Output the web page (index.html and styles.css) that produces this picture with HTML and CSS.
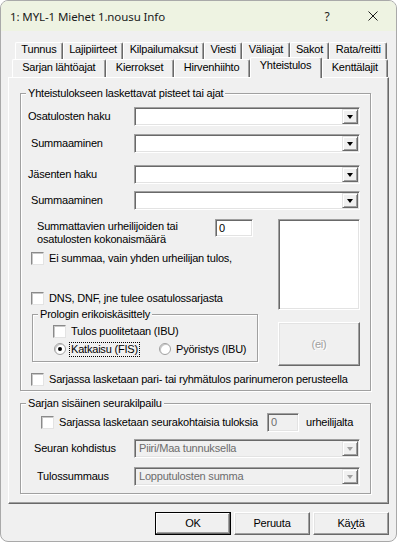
FILE: index.html
```html
<!DOCTYPE html>
<html lang="fi">
<head>
    <meta charset="UTF-8">
    <title>1: MYL-1 Miehet 1.nousu Info</title>
    <link rel="stylesheet" href="styles.css">
</head>
<body>
<div class="window">

    <!-- otsikkopalkki -->
    <div class="titlebar">
        <span class="title">1: MYL-1 Miehet 1.nousu Info</span>
        <span class="caption-btn">?</span>
        <span class="caption-btn">
            <svg width="10" height="10" viewBox="0 0 10 10"><path d="M0.5 0.5L9.5 9.5M9.5 0.5L0.5 9.5" stroke="#1b1b1b" stroke-width="1" fill="none"/></svg>
        </span>
    </div>

    <div class="dialog">

        <!-- välilehdet -->
        <div class="tabs">
            <div class="tab-row back">
                <span class="tab">Tunnus</span>
                <span class="tab">Lajipiirteet</span>
                <span class="tab">Kilpailumaksut</span>
                <span class="tab">Viesti</span>
                <span class="tab">Väliajat</span>
                <span class="tab">Sakot</span>
                <span class="tab">Rata/reitti</span>
            </div>
            <div class="tab-row front">
                <span class="tab">Sarjan lähtöajat</span>
                <span class="tab">Kierrokset</span>
                <span class="tab">Hirvenhiihto</span>
                <span class="tab active">Yhteistulos</span>
                <span class="tab">Kenttälajit</span>
            </div>
        </div>

        <div class="page">

            <fieldset class="group group-main">
                <legend>Yhteistulokseen laskettavat pisteet tai ajat</legend>

                <div class="field-row">
                    <span class="lbl">Osatulosten haku</span>
                    <span class="combo"><span class="drop"></span></span>
                </div>
                <div class="field-row row-sum1">
                    <span class="lbl indent">Summaaminen</span>
                    <span class="combo"><span class="drop"></span></span>
                </div>
                <div class="field-row row-members">
                    <span class="lbl">Jäsenten haku</span>
                    <span class="combo"><span class="drop"></span></span>
                </div>
                <div class="field-row row-sum2">
                    <span class="lbl indent">Summaaminen</span>
                    <span class="combo"><span class="drop"></span></span>
                </div>

                <div class="lower">
                    <div class="lower-left">
                        <div class="count-row">
                            <span class="count-text">Summattavien urheilijoiden tai<br>osatulosten kokonaismäärä</span>
                            <span class="edit count-edit">0</span>
                        </div>
                        <div class="check-row row-single"><span class="check"></span>Ei summaa, vain yhden urheilijan tulos,</div>
                        <div class="check-row row-dns"><span class="check"></span>DNS, DNF, jne tulee osatulossarjasta</div>

                        <fieldset class="group prolog">
                            <legend>Prologin erikoiskäsittely</legend>
                            <div class="check-row row-half"><span class="check"></span>Tulos puolitetaan (IBU)</div>
                            <div class="radio-row">
                                <span class="radio-item"><span class="radio checked"></span><span class="focus">Katkaisu (FIS)</span></span>
                                <span class="radio-item"><span class="radio"></span>Pyöristys (IBU)</span>
                            </div>
                        </fieldset>
                    </div>
                    <div class="lower-right">
                        <div class="listbox"></div>
                        <span class="btn btn-ei">(ei)</span>
                    </div>
                </div>

                <div class="check-row row-pair"><span class="check"></span>Sarjassa lasketaan pari- tai ryhmätulos parinumeron perusteella</div>
            </fieldset>

            <fieldset class="group group-club">
                <legend>Sarjan sisäinen seurakilpailu</legend>

                <div class="check-row row-club">
                    <span class="check"></span>
                    <span class="club-text">Sarjassa lasketaan seurakohtaisia tuloksia</span>
                    <span class="edit club-edit disabled">0</span>
                    <span class="club-unit">urheilijalta</span>
                </div>
                <div class="field-row row-target">
                    <span class="lbl club-lbl1">Seuran kohdistus</span>
                    <span class="combo disabled"><span class="combo-text">Piiri/Maa tunnuksella</span><span class="drop"></span></span>
                </div>
                <div class="field-row row-total">
                    <span class="lbl club-lbl2">Tulossummaus</span>
                    <span class="combo disabled"><span class="combo-text">Lopputulosten summa</span><span class="drop"></span></span>
                </div>
            </fieldset>

        </div>

        <!-- painikkeet -->
        <div class="buttons">
            <span class="btn btn-default">OK</span>
            <span class="btn">Peruuta</span>
            <span class="btn">Kä<u>y</u>tä</span>
        </div>

    </div>
</div>
</body>
</html>
```

FILE: styles.css
```css
* {
    box-sizing: border-box;
}

html, body {
    margin: 0;
    padding: 0;
}

body {
    width: 397px;
    height: 542px;
    background: #ffffff;
    font-family: "Liberation Sans", Arial, sans-serif;
    font-size: 11px;
    line-height: 13px;
    letter-spacing: -0.2px;
    color: #000;
    overflow: hidden;
}

.window {
    width: 397px;
    height: 542px;
    border: 1px solid #a9a9a9;
    border-radius: 8px;
    background: #f0f0f0;
    overflow: hidden;
}

/* otsikkopalkki */
.titlebar {
    height: 30px;
    display: flex;
    align-items: center;
    padding-left: 9px;
    background: #eef3e2;
    font-family: "Noto Sans", "Open Sans", sans-serif;
    font-size: 11.5px;
    letter-spacing: -0.1px;
    color: #1b1b1b;
}

.titlebar .title {
    flex: 1;
}

.caption-btn {
    width: 46px;
    height: 30px;
    display: flex;
    align-items: center;
    justify-content: center;
    font-size: 12px;
}

.dialog {
    padding: 11px 7px 0 7px;
}

/* välilehdet */
.tab-row {
    display: flex;
    align-items: flex-start;
}

.tab-row.back {
    height: 17px;
    margin: 0 2px 0 7px;
}

.tab-row.front {
    height: 18px;
    margin: 0 1px 0 4px;
}

.tab {
    flex: 1 1 auto;
    text-align: center;
    white-space: nowrap;
    padding: 0 3px;
    background: #f0f0f0;
    border-top: 1px solid #fff;
    border-left: 1px solid #fff;
    border-right: 1px solid #696969;
    box-shadow: inset -1px 0 0 #a0a0a0;
    border-radius: 2px 2px 0 0;
}

.back .tab {
    height: 17px;
}

.front .tab {
    height: 18px;
    padding-top: 1px;
}

.front .tab.active {
    height: 21px;
    margin-top: -2px;
    margin-bottom: -1px;
    position: relative;
    z-index: 1;
}

/* välilehtisivu */
.page {
    height: 427px;
    border: 1px solid;
    border-color: #fff #696969 #696969 #fff;
    box-shadow: inset -1px -1px 0 #a0a0a0;
    padding: 9px 17px 0 11px;
}

.group {
    margin: 0;
    min-width: 0;
    border: 1px solid #a0a0a0;
    box-shadow: inset 1px 1px 0 #fff, 1px 1px 0 #fff;
}

.group legend {
    padding: 0 2px;
    margin-left: -2px;
    background: #f0f0f0;
    line-height: 13px;
}

.group-main {
    padding: 7px 10px 4px 7px;
}

.field-row {
    display: flex;
    align-items: center;
    height: 19px;
}

.row-sum1 {
    margin-top: 8px;
}

.row-members {
    margin-top: 12px;
}

.row-sum2 {
    margin-top: 7px;
}

.lbl {
    width: 106px;
    flex: none;
    white-space: nowrap;
}

.lbl.indent {
    padding-left: 3px;
}

/* upotetut kentät */
.combo,
.edit,
.listbox {
    background: #fff;
    border: 1px solid;
    border-color: #a0a0a0 #fff #fff #a0a0a0;
    box-shadow: inset 1px 1px 0 #696969, inset -1px -1px 0 #e3e3e3;
}

.combo {
    flex: 1;
    height: 19px;
    display: flex;
    align-items: center;
    justify-content: flex-end;
    padding: 1px;
}

.combo-text {
    flex: 1;
    padding-left: 3px;
    white-space: nowrap;
    color: #6d6d6d;
}

.drop {
    width: 16px;
    height: 15px;
    flex: none;
    display: flex;
    align-items: center;
    justify-content: center;
    background: #f0f0f0;
    border: 1px solid;
    border-color: #e3e3e3 #696969 #696969 #e3e3e3;
    box-shadow: inset 1px 1px 0 #fff, inset -1px -1px 0 #a0a0a0;
}

.drop::before {
    content: "";
    border-style: solid;
    border-width: 4px 3.5px 0 3.5px;
    border-color: #000 transparent transparent transparent;
    margin-top: 1px;
}

.disabled,
.combo.disabled {
    background: #f0f0f0;
    color: #6d6d6d;
}

.combo.disabled .drop::before {
    border-top-color: #a0a0a0;
}

.edit {
    height: 18px;
    padding: 1px 3px;
    line-height: 14px;
}

/* alaosa */
.lower {
    display: flex;
    margin-top: 9px;
}

.lower-left {
    flex: 1;
}

.lower-right {
    width: 82px;
    flex: none;
}

.count-row {
    display: flex;
    align-items: flex-start;
}

.count-text {
    width: 178px;
    margin-left: 9px;
    padding-top: 1px;
}

.count-edit {
    width: 38px;
}

.listbox {
    height: 91px;
}

.btn {
    display: flex;
    align-items: center;
    justify-content: center;
    height: 23px;
    background: #f0f0f0;
    border: 1px solid;
    border-color: #fff #696969 #696969 #fff;
    box-shadow: inset -1px -1px 0 #a0a0a0, inset 1px 1px 0 #e3e3e3;
}

.btn-ei {
    height: 44px;
    margin-top: 12px;
    color: #a0a0a0;
    text-shadow: 1px 1px 0 #fff;
}

.check-row {
    display: flex;
    align-items: center;
    height: 13px;
    white-space: nowrap;
}

.check {
    width: 13px;
    height: 13px;
    flex: none;
    margin: 0 5px 0 3px;
    background: #fff;
    border: 1px solid;
    border-color: #8a8a8a #e3e3e3 #e3e3e3 #8a8a8a;
    box-shadow: inset 1px 1px 0 #c8c8c8;
}

.row-single {
    margin-top: 6px;
}

.row-dns {
    margin-top: 27px;
}

.prolog {
    width: 226px;
    margin: 3px 0 0 4px;
    padding: 4px 4px 5px 7px;
}

.row-half .check {
    margin-left: 13px;
}

.radio-row {
    display: flex;
    align-items: center;
    height: 14px;
    margin-top: 4px;
}

.radio-item {
    display: flex;
    align-items: center;
    white-space: nowrap;
}

.radio-item:first-child {
    width: 119px;
    flex: none;
}

.radio {
    width: 12px;
    height: 12px;
    flex: none;
    margin: 0 5px 0 14px;
    border-radius: 50%;
    background: #fff;
    border: 1px solid #a0a0a0;
    box-shadow: inset 1px 1px 0 #c8c8c8;
    display: flex;
    align-items: center;
    justify-content: center;
}

.radio-item + .radio-item .radio {
    margin-left: 0;
}

.radio.checked::before {
    content: "";
    width: 4px;
    height: 4px;
    border-radius: 50%;
    background: #000;
}

.focus {
    outline: 1px dotted #000;
    outline-offset: 0;
    padding: 0 1px;
    margin-left: -1px;
}

.row-pair {
    margin-top: 7px;
}

/* seurakilpailu */
.group-club {
    margin-top: 6px;
    padding: 3px 10px 7px 7px;
}

.row-club {
    height: 19px;
}

.row-club .check {
    margin-left: 13px;
}

.club-text {
    width: 208px;
}

.club-edit {
    width: 32px;
    height: 19px;
}

.club-unit {
    margin-left: 7px;
}

.row-target {
    margin-top: 7px;
}

.row-total {
    margin-top: 9px;
}

.club-lbl1 {
    padding-left: 6px;
}

.club-lbl2 {
    padding-left: 9px;
}

/* painikkeet */
.buttons {
    display: flex;
    justify-content: flex-end;
    gap: 3px;
    margin-top: 8px;
}

.buttons .btn {
    width: 76px;
}

.btn-default {
    border-color: #000;
    box-shadow: inset -1px -1px 0 #696969, inset 1px 1px 0 #fff, inset -2px -2px 0 #a0a0a0;
}
```
